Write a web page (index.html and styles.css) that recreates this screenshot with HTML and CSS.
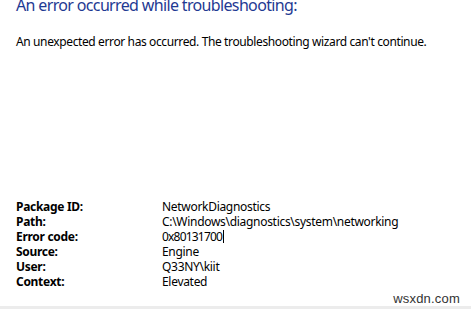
FILE: index.html
```html
<!DOCTYPE html>
<html>
<head>
<meta charset="utf-8">
<link rel="stylesheet" href="styles.css">
</head>
<body>
<div class="page">
  <h1 class="title">An error occurred while troubleshooting:</h1>
  <p class="message">An unexpected error has occurred. The troubleshooting wizard can't continue.</p>
  <div class="details">
    <div class="label">Package ID:</div><div class="value">NetworkDiagnostics</div>
    <div class="label">Path:</div><div class="value">C:\Windows\diagnostics\system\networking</div>
    <div class="label">Error code:</div><div class="value code">0x80131700<span class="caret"></span></div>
    <div class="label">Source:</div><div class="value">Engine</div>
    <div class="label">User:</div><div class="value">Q33NY\kiit</div>
    <div class="label">Context:</div><div class="value">Elevated</div>
  </div>
  <div class="footer"><span class="watermark">wsxdn.com</span></div>
</div>
</body>
</html>
```
FILE: styles.css
```css
html, body {
  margin: 0;
  padding: 0;
  background: #ffffff;
}
.page {
  width: 471px;
  height: 309px;
  overflow: hidden;
  display: flex;
  flex-direction: column;
  font-family: "Noto Sans", "Open Sans", sans-serif;
  color: #000;
}
.title {
  margin: -5px 0 0 16px;
  font-size: 16px;
  line-height: 20px;
  font-weight: normal;
  letter-spacing: -0.65px;
  color: #1f3a93;
}
.message {
  margin: 19px 0 0 16px;
  font-size: 12px;
  line-height: 15px;
  letter-spacing: -0.38px;
}
.details {
  margin: 150px 0 0 16px;
  display: grid;
  grid-template-columns: 146px auto;
  font-size: 12px;
  line-height: 15px;
  letter-spacing: -0.3px;
}
.label {
  font-weight: bold;
}
.code {
  letter-spacing: -0.8px;
}
.caret {
  display: inline-block;
  width: 1px;
  height: 13px;
  margin-left: 1px;
  background: #000;
  vertical-align: -2px;
}
.footer {
  margin-top: auto;
  height: 26px;
  display: flex;
  align-items: flex-start;
  justify-content: flex-end;
  border-bottom: 6px solid #ececec;
  box-sizing: border-box;
}
.watermark {
  font-family: "Liberation Sans", Arial, sans-serif;
  font-size: 13px;
  color: #333;
  margin: 2px 11px 0 0;
  letter-spacing: 0.2px;
}
```
